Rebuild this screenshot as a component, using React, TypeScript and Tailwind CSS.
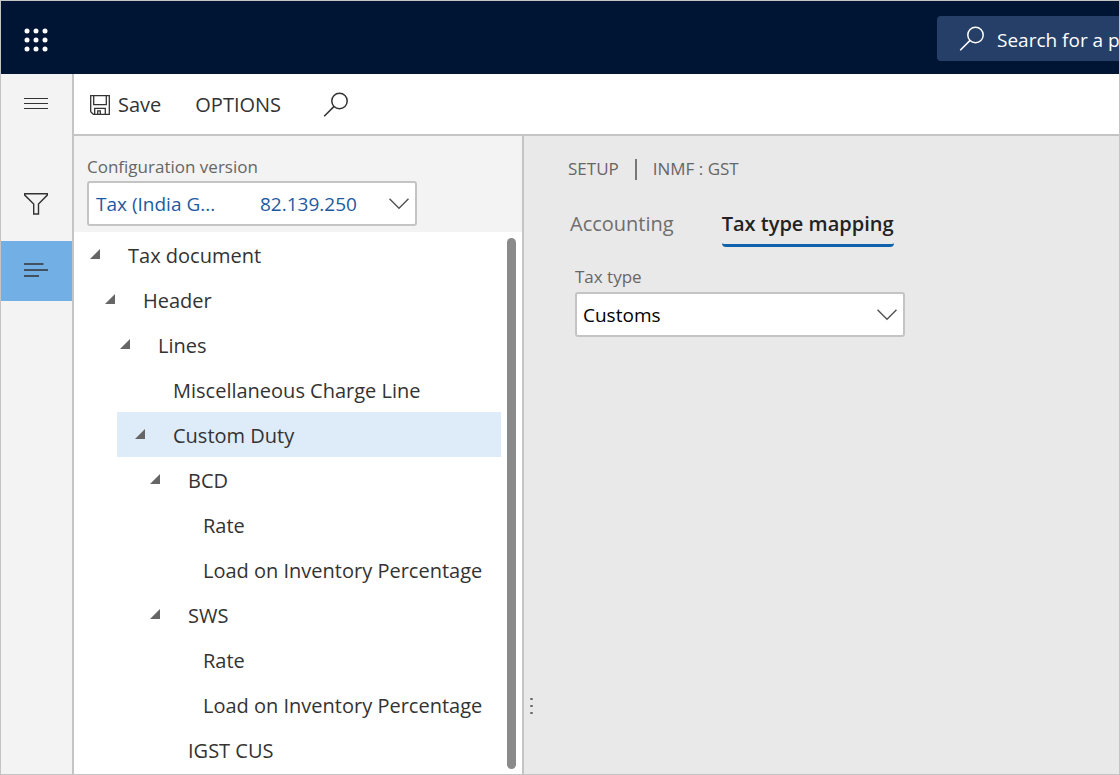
import React from "react";

type TreeNode = { label: string; selected?: boolean; children?: TreeNode[] };

const tree: TreeNode[] = [
  {
    label: "Tax document",
    children: [
      {
        label: "Header",
        children: [
          {
            label: "Lines",
            children: [
              { label: "Miscellaneous Charge Line" },
              {
                label: "Custom Duty",
                selected: true,
                children: [
                  {
                    label: "BCD",
                    children: [{ label: "Rate" }, { label: "Load on Inventory Percentage" }],
                  },
                  {
                    label: "SWS",
                    children: [{ label: "Rate" }, { label: "Load on Inventory Percentage" }],
                  },
                  { label: "IGST CUS" },
                ],
              },
            ],
          },
        ],
      },
    ],
  },
];

function Waffle() {
  const steps = [3, 12, 21];
  return (
    <svg width="24" height="24" viewBox="0 0 24 24" fill="#fff" aria-hidden="true">
      {steps.map((y) => steps.map((x) => <circle key={`${x}-${y}`} cx={x} cy={y} r="2.5" />))}
    </svg>
  );
}

function Magnifier() {
  return (
    <svg width="26" height="26" viewBox="0 0 26 26" fill="none" stroke="currentColor" strokeWidth="1.5" aria-hidden="true">
      <circle cx="16.5" cy="9" r="7.7" />
      <path d="M11.1 14.4 1.2 24.3" />
    </svg>
  );
}

function Disk() {
  return (
    <svg width="20" height="20" viewBox="0 0 20 20" fill="none" stroke="#333" strokeWidth="1.3" aria-hidden="true">
      <path d="M.7.7h18.6v18.6H3.3L.7 16.7z" />
      <path d="M3.7.7v9h12.6v-9" />
      <path d="M4.7 19.3v-6h10.6v6M7.7 19.3v-3.5h2.6v3.5" />
    </svg>
  );
}

function Chevron() {
  return (
    <svg width="20" height="12" viewBox="0 0 20 12" fill="none" stroke="#555" strokeWidth="1.5" aria-hidden="true">
      <path d="M.5.8 10 10.3 19.5.8" />
    </svg>
  );
}

function Branch({ nodes, depth = 0 }: { nodes: TreeNode[]; depth?: number }) {
  const indent = depth === 0 ? "" : depth === 1 ? "ml-[13px]" : "ml-[15px]";
  return (
    <ul role={depth === 0 ? "tree" : "group"} aria-label={depth === 0 ? "Tax document structure" : undefined} className={indent}>
      {nodes.map((node) => (
        <li
          key={node.label}
          role="treeitem"
          aria-expanded={node.children ? true : undefined}
          aria-selected={node.selected ?? false}
        >
          <button
            type="button"
            className={`flex h-[45px] w-full items-center pt-[3px] text-left whitespace-nowrap ${depth === 0 ? "pl-4" : "pl-[18px]"} ${node.selected ? "bg-[#deebf9]" : ""}`}
          >
            <span className="flex w-[38px] shrink-0 pb-1">
              {node.children && (
                <svg width="10" height="10" viewBox="0 0 10 10" fill="#666" aria-hidden="true">
                  <path d="M10 0v10H0z" />
                </svg>
              )}
            </span>
            {node.label}
          </button>
          {node.children && <Branch nodes={node.children} depth={depth + 1} />}
        </li>
      ))}
    </ul>
  );
}

export default function App() {
  return (
    <div className="flex min-h-screen flex-col border border-[#c4c4c4] bg-[#e9e9e9] font-['Open_Sans','Noto_Sans',sans-serif] text-[20px] leading-6 text-[#333]">
      <header className="flex h-[73px] items-center justify-between bg-[#001433]">
        <button type="button" aria-label="App launcher" className="flex w-[70px] justify-center pt-1">
          <Waffle />
        </button>
        <label className="mt-0.5 flex h-[45px] w-[182px] items-center gap-3 rounded-l-sm bg-[#263f68] pl-[22px] text-[19px] text-white">
          <span className="shrink-0">
            <Magnifier />
          </span>
          <input
            type="text"
            aria-label="Search for a page"
            placeholder="Search for a page"
            className="min-w-0 flex-1 bg-transparent pt-0.5 outline-none placeholder:text-white"
          />
        </label>
      </header>

      <div className="flex flex-1">
        <nav aria-label="Main" className="flex w-[73px] shrink-0 flex-col border-r-2 border-[#c4c4c4] bg-[#f3f3f3]">
          <button type="button" aria-label="Expand navigation" className="flex h-[60px] items-center justify-center pr-0.5">
            <svg width="24" height="12" viewBox="0 0 24 12" stroke="#333" strokeWidth="1" aria-hidden="true">
              <path d="M0 .5h24M0 5.5h24M0 10.5h24" />
            </svg>
          </button>
          <button type="button" aria-label="Filter" className="mt-10 flex h-[60px] items-center justify-center pr-0.5">
            <svg width="24" height="22" viewBox="0 0 24 22" fill="none" stroke="#333" strokeWidth="1.4" aria-hidden="true">
              <path d="M.7.8h22.6v1.3L14.5 11v10H9.7V11L.7 2.1z" />
            </svg>
          </button>
          <button type="button" aria-label="Related information" className="mt-[7px] flex h-[60px] items-center justify-center bg-[#71afe5] pr-0.5 pb-0.5">
            <svg width="24" height="14" viewBox="0 0 24 14" stroke="#333" strokeWidth="1.5" aria-hidden="true">
              <path d="M0 1h19.5M0 7h24M0 13h15" />
            </svg>
          </button>
        </nav>

        <div className="flex min-w-0 flex-1 flex-col">
          <div role="toolbar" aria-label="Actions" className="flex h-[62px] items-center border-b-2 border-[#c4c4c4] bg-white pt-0.5 pl-4">
            <button type="button" className="flex items-center gap-2">
              <Disk />
              Save
            </button>
            <button type="button" className="ml-[34px]">
              OPTIONS
            </button>
            <button type="button" aria-label="Search actions" className="ml-[42px]">
              <Magnifier />
            </button>
          </div>

          <div className="flex flex-1">
            <aside className="flex w-[450px] shrink-0 flex-col border-r-2 border-[#c4c4c4] bg-white">
              <div className="flex h-24 flex-col bg-[#f3f3f3] pt-5 pl-[13px]">
                <span id="version-label" className="text-[17px] leading-[22px] text-[#666]">
                  Configuration version
                </span>
                <button
                  type="button"
                  aria-haspopup="listbox"
                  aria-labelledby="version-label version-value"
                  className="mt-[3px] flex h-[45px] w-[330px] items-center rounded-[3px] border-2 border-[#c4c4c4] bg-white pr-1.5 pl-[7px] text-left text-[19px] text-[#1e5aa0]"
                >
                  <span id="version-value" className="flex flex-1 pt-px">
                    <span className="w-[164px]">Tax (India G...</span>
                    <span>82.139.250</span>
                  </span>
                  <Chevron />
                </button>
              </div>
              <div className="flex flex-1">
                <div className="w-[427px]">
                  <Branch nodes={tree} />
                </div>
                <div className="mt-1.5 mb-[5px] ml-1.5 w-[9px] rounded-full bg-[#8a8a8a]" />
              </div>
            </aside>

            <div className="flex w-3.5 shrink-0 flex-col items-center justify-end pb-[60px]">
              <svg width="3" height="16" viewBox="0 0 3 16" fill="#666" aria-hidden="true">
                <path d="M.3 0h2.4v2H.3zM.3 7h2.4v2H.3zM.3 14h2.4v2H.3z" />
              </svg>
            </div>

            <main className="flex-1 pt-[21px] pl-[30px]">
              <div className="flex items-center gap-4 text-[17px] text-[#666]">
                <span>SETUP</span>
                <span className="h-[21px] w-0.5 bg-[#777]" />
                <span>INMF : GST</span>
              </div>
              <div role="tablist" className="mt-[31px] flex gap-12 pl-0.5">
                <button type="button" role="tab" aria-selected="false" className="pb-[11px] text-[#6e6e6e]">
                  Accounting
                </button>
                <button
                  type="button"
                  role="tab"
                  aria-selected="true"
                  className="rounded-b-sm border-b-3 border-[#0f62ac] pb-2 font-semibold text-[#222]"
                >
                  Tax type mapping
                </button>
              </div>
              <div className="flex flex-col pt-[19px] pl-[7px]">
                <label htmlFor="tax-type" className="text-[17px] leading-[22px] text-[#666]">
                  Tax type
                </label>
                <div className="mt-1 grid w-[330px] items-center">
                  <select
                    id="tax-type"
                    className="col-start-1 row-start-1 h-[45px] w-full appearance-none rounded-[3px] border-2 border-[#c4c4c4] bg-white pl-1.5 text-[19px] text-black"
                  >
                    <option>Customs</option>
                  </select>
                  <span className="pointer-events-none col-start-1 row-start-1 mr-2 justify-self-end">
                    <Chevron />
                  </span>
                </div>
              </div>
            </main>
          </div>
        </div>
      </div>
    </div>
  );
}
